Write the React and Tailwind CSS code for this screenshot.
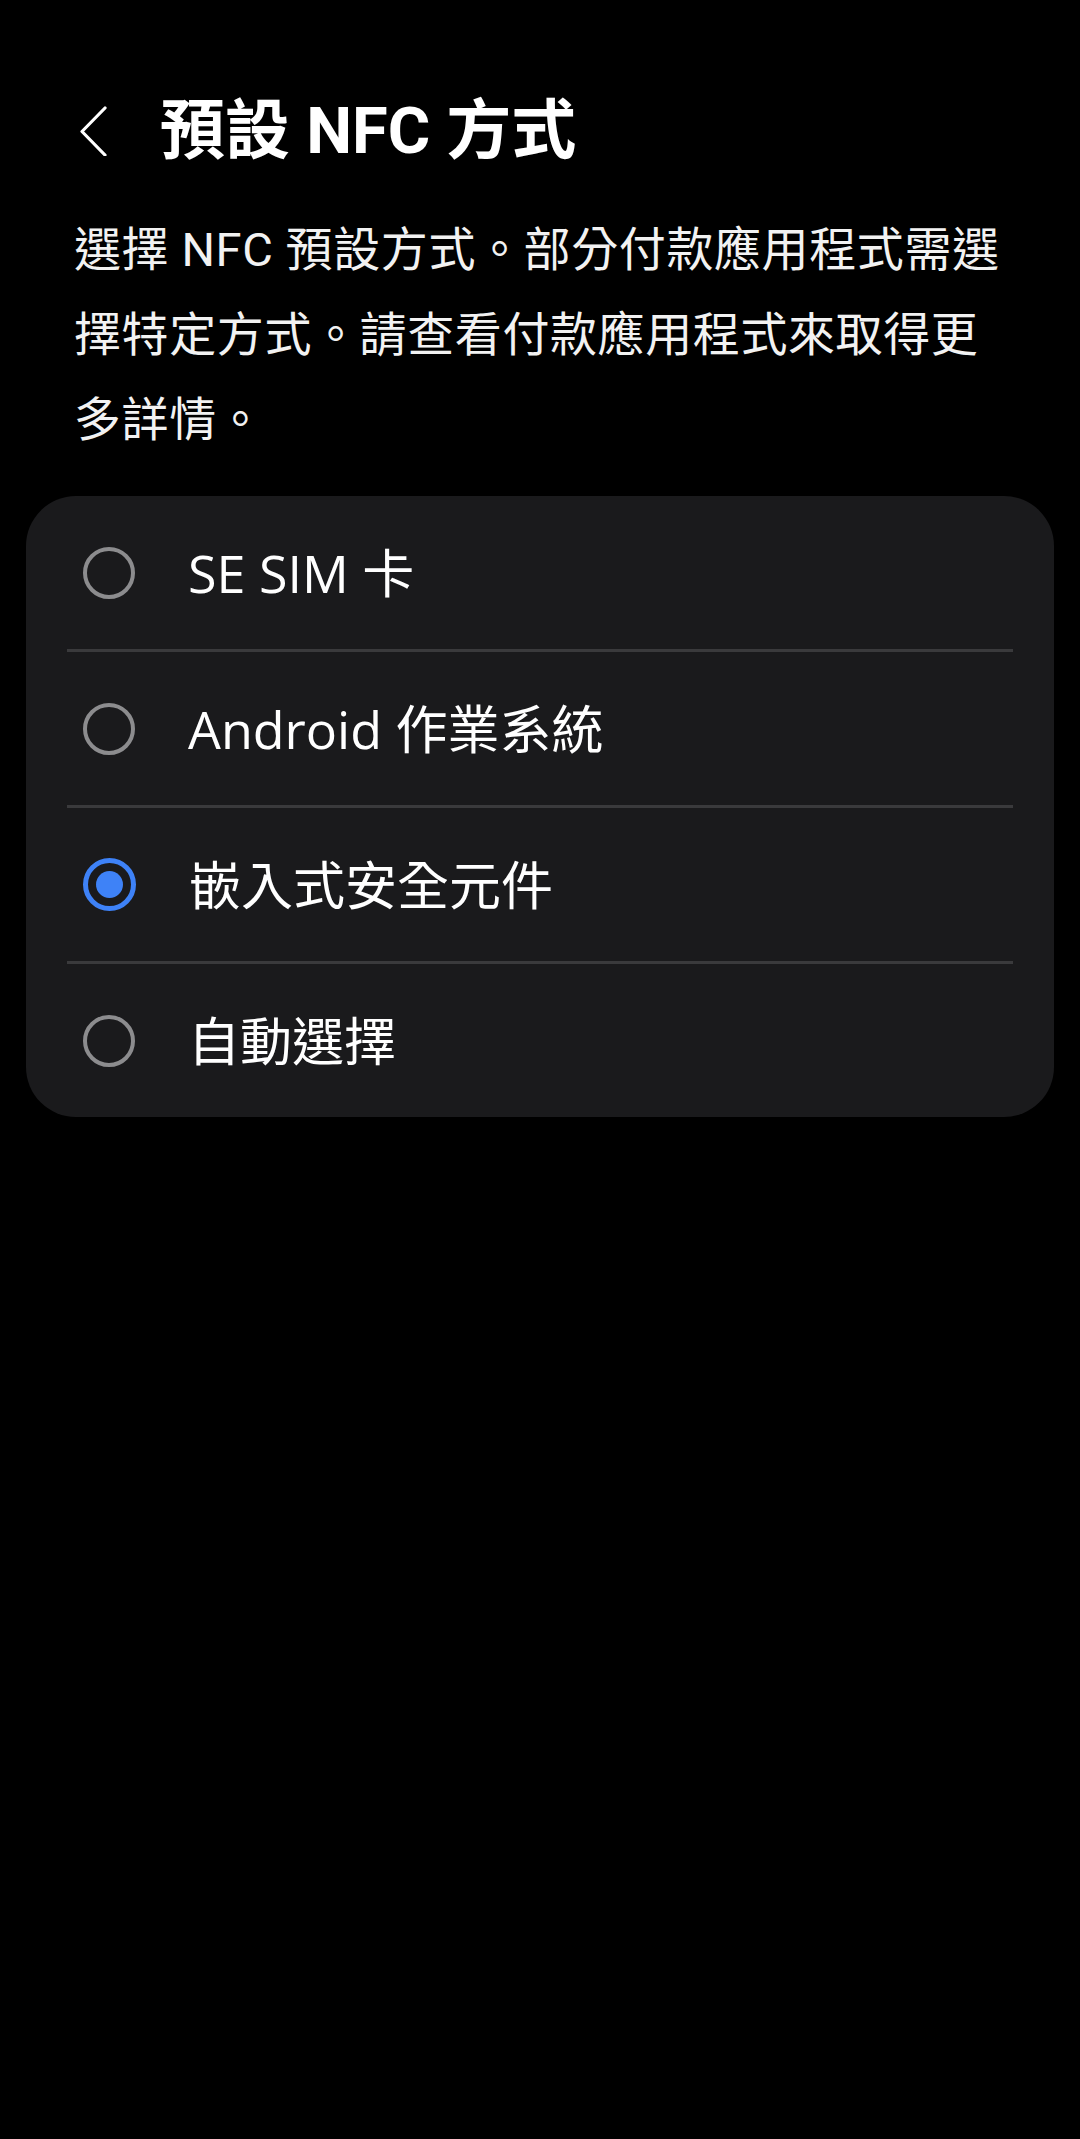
import React from "react";

const items = [
  { label: "SE SIM 卡", selected: false },
  { label: "Android 作業系統", selected: false },
  { label: "嵌入式安全元件", selected: true },
  { label: "自動選擇", selected: false },
];

function Radio({ selected }) {
  if (selected) {
    return (
      <div className="w-[53px] h-[53px] rounded-full border-[5px] border-[#3e82f7] flex items-center justify-center shrink-0">
        <div className="w-[27px] h-[27px] rounded-full bg-[#3e82f7]" />
      </div>
    );
  }
  return <div className="w-[52px] h-[52px] rounded-full border-[4px] border-[#8c8c8e] shrink-0" />;
}

export default function App() {
  const font = { fontFamily: 'Roboto, "Noto Sans CJK TC", sans-serif' };
  const rowFont = { fontFamily: '"Open Sans", "Noto Sans CJK TC", sans-serif' };
  return (
    <div className="w-[1080px] h-[2139px] bg-black text-white" style={font}>
      <div className="pt-[91px] flex items-center h-[171px]">
        <div className="w-[160px] flex items-center pl-[79px]">
          <svg width="30" height="50" viewBox="0 0 30 50" fill="none">
            <path d="M26 2 L3 25.5 L26 49" stroke="white" strokeWidth="3.2" strokeLinecap="round" strokeLinejoin="round" />
          </svg>
        </div>
        <h1 className="text-[65px] leading-[80px] font-bold">預設 NFC 方式</h1>
      </div>
      <div className="mt-[36px] pl-[74px] text-[47px] leading-[85px] text-[#f2f2f2] tracking-[0.6px]">
        <div className="whitespace-nowrap">選擇 NFC 預設方式。部分付款應用程式需選</div>
        <div className="whitespace-nowrap">擇特定方式。請查看付款應用程式來取得更</div>
        <div className="whitespace-nowrap">多詳情。</div>
      </div>
      <div className="mt-[34px] mx-[26px] rounded-[50px] bg-[#1a1a1c]">
        {items.map((it, i) => (
          <div key={it.label}>
            {i > 0 && <div className="mx-[41px] h-[3px] bg-[#3a3a3c]" />}
            <div className="h-[153px] flex items-center pl-[57px]">
              <Radio selected={it.selected} />
              <span className="ml-[53px] text-[52px] leading-none" style={rowFont}>{it.label}</span>
            </div>
          </div>
        ))}
      </div>
    </div>
  );
}
